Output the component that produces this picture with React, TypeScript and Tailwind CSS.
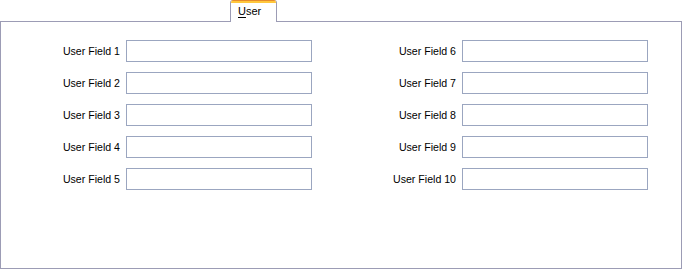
import React from 'react';

const leftFields = ['User Field 1', 'User Field 2', 'User Field 3', 'User Field 4', 'User Field 5'];
const rightFields = ['User Field 6', 'User Field 7', 'User Field 8', 'User Field 9', 'User Field 10'];

const FieldRow: React.FC<{ label: string }> = ({ label }) => (
  <div className="flex items-center h-[22px]">
    <label className="w-[119px] mr-[6px] text-right text-[10.6px] text-black leading-none">{label}</label>
    <input
      type="text"
      className="w-[186px] h-[22px] bg-white border border-[#9ba6c0] outline-none px-1 text-[11px]"
    />
  </div>
);

export default function App() {
  return (
    <div className="w-[683px] h-[269px] bg-white" style={{ fontFamily: '"Liberation Sans", Arial, sans-serif' }}>
      <div className="flex h-[22px]">
        <div className="ml-[230px] w-[47px] h-[22px] relative z-10 bg-white border-x border-[#9c9cb5] rounded-t-[3px] overflow-hidden">
          <div className="h-[1px] bg-[#e68b2c]" />
          <div className="h-[2px] bg-[#ffc73c]" />
          <div className="pl-[7px] pt-[2px] text-[11px] leading-[13px] text-black">
            <span className="underline underline-offset-[2px]">U</span>ser
          </div>
        </div>
      </div>
      <div className="w-[682px] h-[248px] -mt-px border border-[#9c9cb5] bg-white">
        <div className="flex gap-[25px] pt-[18px]">
          <div className="flex flex-col gap-[10px]">
            {leftFields.map((f) => (
              <FieldRow key={f} label={f} />
            ))}
          </div>
          <div className="flex flex-col gap-[10px]">
            {rightFields.map((f) => (
              <FieldRow key={f} label={f} />
            ))}
          </div>
        </div>
      </div>
    </div>
  );
}
